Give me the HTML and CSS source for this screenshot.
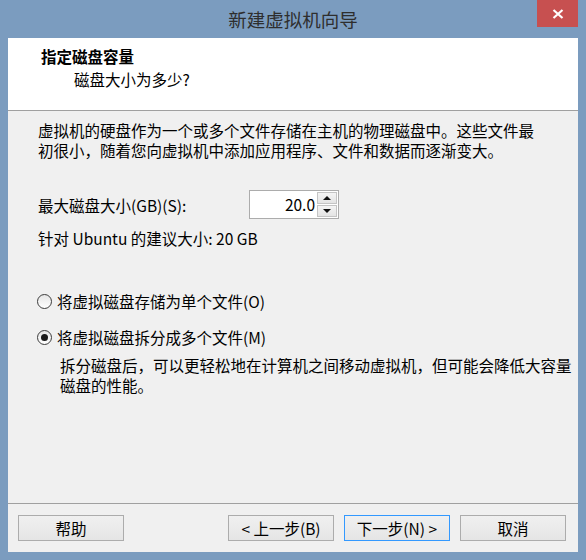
FILE: index.html
```html
<!DOCTYPE html>
<html lang="zh-CN">
  <head>
    <meta charset="UTF-8" />
    <title>新建虚拟机向导</title>
    <link rel="stylesheet" href="styles.css">
  </head>
  <body>
    <div class="window">
      <div class="titlebar">
        <span class="title">新建虚拟机向导</span>
        <a href="javascript:;" class="close">
          <svg width="12" height="10" viewBox="0 0 12 10">
            <path d="M1.5 1 L10.5 9 M10.5 1 L1.5 9" stroke="#fff" stroke-width="2.2" fill="none" />
          </svg>
        </a>
      </div>
      <div class="client">
        <div class="header">
          <div class="head-title">指定磁盘容量</div>
          <div class="head-sub">磁盘大小为多少?</div>
        </div>
        <div class="body">
          <p class="intro">虚拟机的硬盘作为一个或多个文件存储在主机的物理磁盘中。这些文件最<br />初很小，随着您向虚拟机中添加应用程序、文件和数据而逐渐变大。</p>
          <div class="size-row">
            <label class="size-label">最大磁盘大小(GB)(S):</label>
            <div class="spin">
              <span class="spin-value">20.0</span>
              <div class="spin-btns">
                <span class="spin-btn"><i class="tri up"></i></span>
                <span class="spin-btn"><i class="tri down"></i></span>
              </div>
            </div>
          </div>
          <p class="hint">针对 Ubuntu 的建议大小: 20 GB</p>
          <div class="option first"><span class="radio"></span>将虚拟磁盘存储为单个文件(O)</div>
          <div class="option"><span class="radio checked"></span>将虚拟磁盘拆分成多个文件(M)</div>
          <p class="option-desc">拆分磁盘后，可以更轻松地在计算机之间移动虚拟机，但可能会降低大容量<br />磁盘的性能。</p>
        </div>
        <div class="footer">
          <button class="btn help">帮助</button>
          <button class="btn">&lt; 上一步(B)</button>
          <button class="btn default">下一步(N) &gt;</button>
          <button class="btn">取消</button>
        </div>
      </div>
    </div>
  </body>
</html>
```

FILE: styles.css
```css
* {
  margin: 0px;
  padding: 0px;
  box-sizing: border-box;
  text-decoration: none;
}
body {
  font-family: "Noto Sans CJK SC", "Microsoft YaHei", sans-serif;
  font-size: 15.5px;
  color: #000;
}
.window {
  width: 586px;
  height: 560px;
  background-color: #7b9cbf;
  padding: 0 8px 8px 8px;
  display: flex;
  flex-direction: column;
}
.titlebar {
  height: 38px;
  display: grid;
  grid-template-columns: 41px 1fr 41px;
}
.title {
  grid-column: 2;
  text-align: center;
  font-size: 18.5px;
  line-height: 38px;
  color: #2e2e2e;
}
.close {
  grid-column: 3;
  height: 27px;
  background-color: #c75050;
  display: flex;
  align-items: center;
  justify-content: center;
}
.client {
  flex: 1;
  background-color: #f0f0f0;
  display: flex;
  flex-direction: column;
}
.header {
  height: 73px;
  background-color: #fff;
  border-bottom: 1px solid #a0a0a0;
  padding: 8px 0 0 33px;
  line-height: 20px;
}
.head-title {
  font-weight: bold;
}
.head-sub {
  margin-top: 3px;
  padding-left: 33px;
}
.body {
  flex: 1;
  padding: 9px 0 0 30px;
  line-height: 20px;
}
.size-row {
  margin-top: 30px;
  display: grid;
  grid-template-columns: 211px 90px;
  align-items: center;
}
.spin {
  height: 29px;
  border: 1px solid #acacac;
  background-color: #fff;
  display: flex;
}
.spin-value {
  flex: 1;
  text-align: right;
  line-height: 27px;
  padding-right: 2px;
}
.spin-btns {
  width: 20px;
  margin-right: 1px;
  padding: 1px 0;
  display: flex;
  flex-direction: column;
  gap: 1px;
}
.spin-btn {
  flex: 1;
  border: 1px solid #c4c4c4;
  background: linear-gradient(#f4f4f4, #e4e4e4);
  display: flex;
  align-items: center;
  justify-content: center;
}
.tri {
  width: 0;
  height: 0;
  border-left: 4px solid transparent;
  border-right: 4px solid transparent;
}
.tri.up {
  border-bottom: 4px solid #111;
}
.tri.down {
  border-top: 4px solid #111;
}
.hint {
  margin-top: 9px;
}
.option {
  margin-top: 16px;
  display: flex;
  align-items: center;
  gap: 5px;
}
.option.first {
  margin-top: 43px;
}
.radio {
  width: 15px;
  height: 15px;
  margin-left: -1px;
  border: 1px solid #3c3c3c;
  border-radius: 50%;
  background: linear-gradient(#e6e6e6, #ffffff);
  display: flex;
  align-items: center;
  justify-content: center;
}
.radio.checked::after {
  content: "";
  width: 7px;
  height: 7px;
  border-radius: 50%;
  background-color: #1a1a1a;
}
.option-desc {
  margin-top: 8px;
  padding-left: 22px;
}
.footer {
  border-top: 1px solid #a0a0a0;
  padding: 11px 12px 11px 10px;
  display: flex;
  gap: 10px;
}
.btn {
  width: 106px;
  height: 26px;
  border: 1px solid #acacac;
  background: linear-gradient(#f0f0f0, #e5e5e5);
  font-family: inherit;
  font-size: 15.5px;
  color: #000;
  line-height: 22px;
}
.btn.help {
  margin-right: auto;
}
.btn.default {
  border-color: #3399ff;
}
```
